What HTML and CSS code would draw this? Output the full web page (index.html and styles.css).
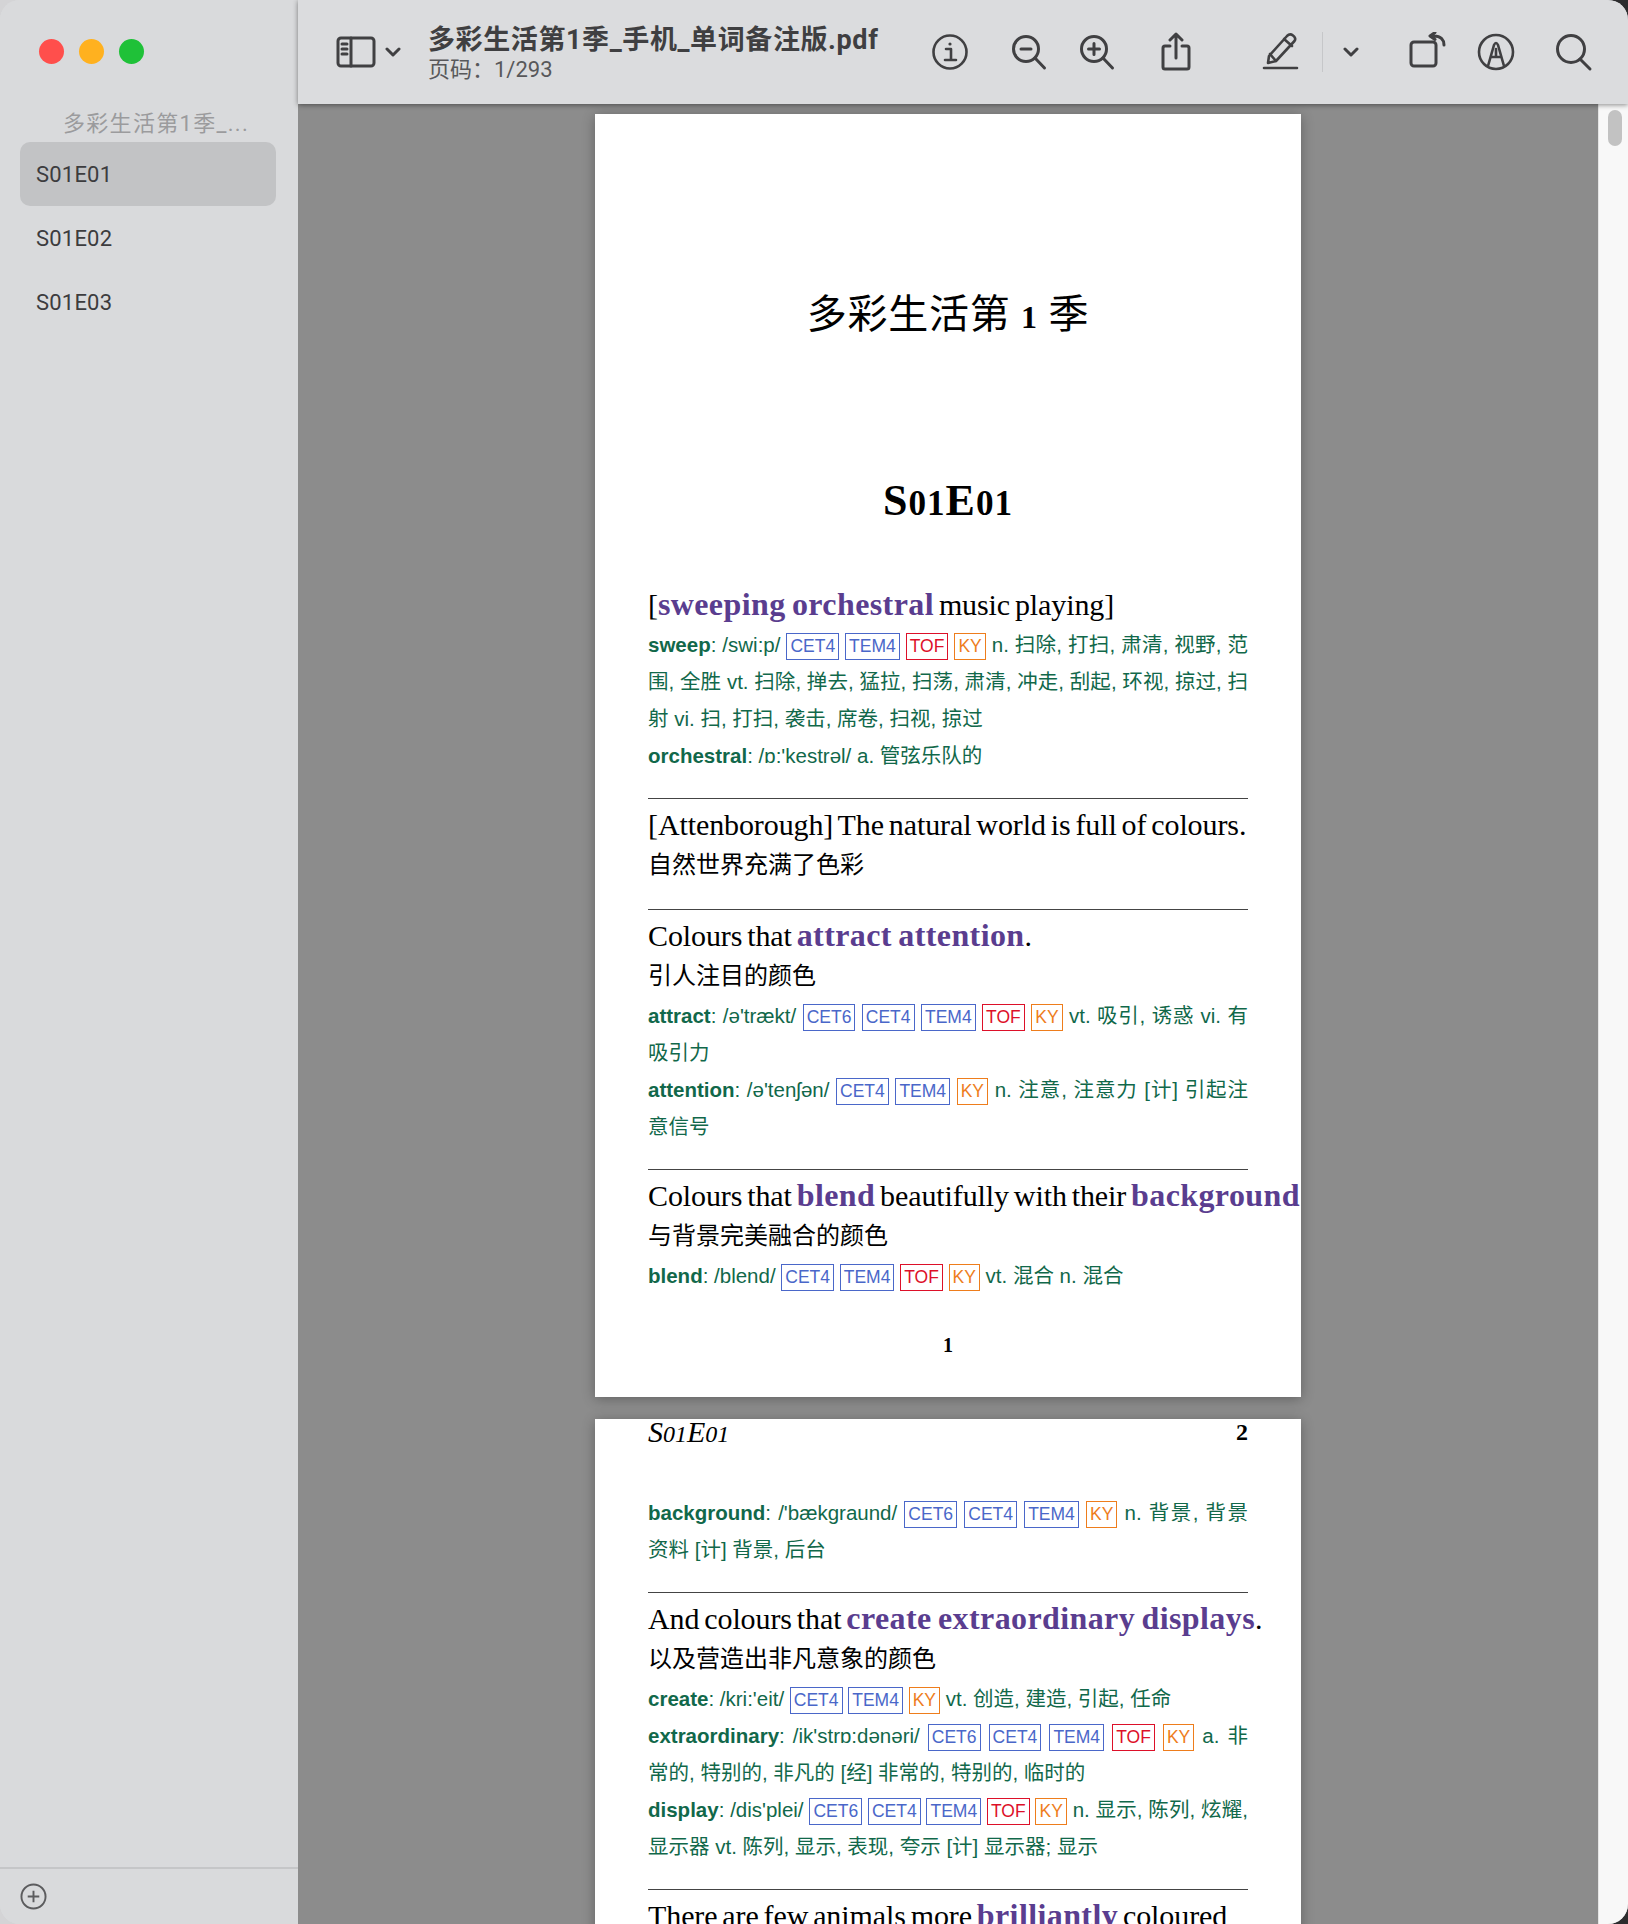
FILE: index.html
```html
<!DOCTYPE html>
<html>
<head>
    <meta charset="utf-8">
    <title>多彩生活第1季_手机_单词备注版.pdf</title>
    <link rel="stylesheet" href="styles.css">
</head>
<body>
    <div class="window">
        <aside class="sidebar">
            <div class="lights">
                <span class="light light-red"></span>
                <span class="light light-amber"></span>
                <span class="light light-green"></span>
            </div>
            <div class="doc-name">多彩生活第1季_...</div>
            <ul class="toc">
                <li class="toc-item selected">S01E01</li>
                <li class="toc-item">S01E02</li>
                <li class="toc-item">S01E03</li>
            </ul>
            <div class="sidebar-foot">
                <svg class="add-icon" viewBox="0 0 28 28"><circle cx="14" cy="14" r="12.5"/><path d="M14 8v12M8 14h12"/></svg>
            </div>
        </aside>

        <main class="main">
            <header class="toolbar">
                <svg class="tool tool-sidebar" viewBox="0 0 40 32"><rect x="2" y="2" width="36" height="28" rx="3"/><path d="M15 2v28M6 8h5M6 13h5M6 18h5"/></svg>
                <svg class="tool tool-chevron" viewBox="0 0 16 12"><path d="M2 3l6 6 6-6"/></svg>
                <div class="doc-title">
                    <div class="doc-file">多彩生活第1季_手机_单词备注版.pdf</div>
                    <div class="doc-page">页码：1/293</div>
                </div>
                <svg class="tool tool-info" viewBox="0 0 40 40"><circle cx="20" cy="20" r="16.5"/><path d="M16 17h5v11M15 28h11"/><circle class="dot" cx="20" cy="12" r="1.6"/></svg>
                <svg class="tool tool-zoomout" viewBox="0 0 40 40"><circle cx="17" cy="17" r="12.5"/><path d="M26 26l9.500 10M12 17h10"/></svg>
                <svg class="tool tool-zoomin" viewBox="0 0 40 40"><circle cx="17" cy="17" r="12.5"/><path d="M26 26l9.500 10M11.500 17h11M17 11.500v11"/></svg>
                <svg class="tool tool-share" viewBox="0 0 40 40"><path d="M14 14h-5a2 2 0 0 0-2 2v19a2 2 0 0 0 2 2h22a2 2 0 0 0 2-2V16a2 2 0 0 0-2-2h-5M20 26V2M14 8l6-6 6 6"/></svg>
                <svg class="tool tool-pen" viewBox="0 0 40 40"><path d="M2 36h33M7 24L25 4c2-2 4-2 6-.5s3 3.500 1.500 5.500L14 29l-8 2zM22 7l8 7M8 22l6 7"/></svg>
                <span class="tool-sep"></span>
                <svg class="tool tool-chevron-2" viewBox="0 0 16 12"><path d="M2 3l6 6 6-6"/></svg>
                <svg class="tool tool-rotate" viewBox="0 0 40 40"><rect x="2" y="10" width="25" height="24" rx="3"/><path d="M35 13c0-5-3-9-10-9M26 .5l-5 3.500 5 3.500"/></svg>
                <svg class="tool tool-markup" viewBox="0 0 40 40"><circle cx="20" cy="20" r="17"/><path d="M12 34l6-21q2-4 4 0l6 21M15 25h10M20 17v8"/></svg>
                <svg class="tool tool-search" viewBox="0 0 40 40"><circle cx="17" cy="17" r="13.500"/><path d="M26 27l10 10"/></svg>
            </header>

            <div class="viewer">
                <div class="pages">
                    <section class="page page-first">
                        <h1 class="book-title">多彩生活第 <b class="onum">1</b> 季</h1>
                        <h2 class="episode">S<span class="onum">01</span>E<span class="onum">01</span></h2>

                        <div class="block">
                            <p class="en">[<b>sweeping orchestral</b> music playing]</p>
                            <p class="word"><b>sweep</b>: /swi:p/ <span class="tag blue">CET4</span> <span class="tag blue">TEM4</span> <span class="tag red">TOF</span> <span class="tag orange">KY</span> n. 扫除, 打扫, 肃清, 视野, 范围, 全胜 vt. 扫除, 掸去, 猛拉, 扫荡, 肃清, 冲走, 刮起, 环视, 掠过, 扫射 vi. 扫, 打扫, 袭击, 席卷, 扫视, 掠过</p>
                            <p class="word"><b>orchestral</b>: /ɒ:'kestrəl/ a. 管弦乐队的</p>
                        </div>

                        <div class="block">
                            <p class="en nowrap">[Attenborough] The natural world is full of colours.</p>
                            <p class="zh">自然世界充满了色彩</p>
                        </div>

                        <div class="block">
                            <p class="en">Colours that <b>attract attention</b>.</p>
                            <p class="zh">引人注目的颜色</p>
                            <p class="word first-word"><b>attract</b>: /ə'trækt/ <span class="tag blue">CET6</span> <span class="tag blue">CET4</span> <span class="tag blue">TEM4</span> <span class="tag red">TOF</span> <span class="tag orange">KY</span> vt. 吸引, 诱惑 vi. 有吸引力</p>
                            <p class="word"><b>attention</b>: /ə'tenʃən/ <span class="tag blue">CET4</span> <span class="tag blue">TEM4</span> <span class="tag orange">KY</span> n. 注意, 注意力 [计] 引起注意信号</p>
                        </div>

                        <div class="block block-last">
                            <p class="en nowrap">Colours that <b>blend</b> beautifully with their <b>background</b></p>
                            <p class="zh">与背景完美融合的颜色</p>
                            <p class="word first-word"><b>blend</b>: /blend/ <span class="tag blue">CET4</span> <span class="tag blue">TEM4</span> <span class="tag red">TOF</span> <span class="tag orange">KY</span> vt. 混合 n. 混合</p>
                        </div>

                        <div class="page-number">1</div>
                    </section>

                    <section class="page">
                        <div class="running-head">
                            <i>S<span class="onum">01</span>E<span class="onum">01</span></i>
                            <b>2</b>
                        </div>

                        <div class="block block-top">
                            <p class="word"><b>background</b>: /'bækgraund/ <span class="tag blue">CET6</span> <span class="tag blue">CET4</span> <span class="tag blue">TEM4</span> <span class="tag orange">KY</span> n. 背景, 背景资料 [计] 背景, 后台</p>
                        </div>

                        <div class="block">
                            <p class="en nowrap">And colours that <b>create extraordinary displays</b>.</p>
                            <p class="zh">以及营造出非凡意象的颜色</p>
                            <p class="word first-word"><b>create</b>: /kri:'eit/ <span class="tag blue">CET4</span> <span class="tag blue">TEM4</span> <span class="tag orange">KY</span> vt. 创造, 建造, 引起, 任命</p>
                            <p class="word"><b>extraordinary</b>: /ik'strɒ:dənəri/ <span class="tag blue">CET6</span> <span class="tag blue">CET4</span> <span class="tag blue">TEM4</span> <span class="tag red">TOF</span> <span class="tag orange">KY</span> a. 非常的, 特别的, 非凡的 [经] 非常的, 特别的, 临时的</p>
                            <p class="word"><b>display</b>: /dis'plei/ <span class="tag blue">CET6</span> <span class="tag blue">CET4</span> <span class="tag blue">TEM4</span> <span class="tag red">TOF</span> <span class="tag orange">KY</span> n. 显示, 陈列, 炫耀, 显示器 vt. 陈列, 显示, 表现, 夸示 [计] 显示器; 显示</p>
                        </div>

                        <div class="block">
                            <p class="en nowrap">There are few animals more <b>brilliantly</b> coloured</p>
                        </div>
                    </section>
                </div>
                <div class="scrollbar"><div class="thumb"></div></div>
            </div>
        </main>
    </div>
</body>
</html>
```

FILE: styles.css
```css
* {
    box-sizing: border-box;
}

html,
body {
    margin: 0;
    padding: 0;
}

/* What shows through the rounded window corners */
body {
    background: linear-gradient(to right, #d4d4d6 50%, #2c2c2e 50%);
}

.window {
    display: flex;
    width: 1628px;
    height: 1924px;
    overflow: hidden;
    border-radius: 20px;
    background: #dadbdd;
    font-family: Roboto, "Noto Sans CJK SC", sans-serif;
}

/* Sidebar */
.sidebar {
    display: flex;
    flex-direction: column;
    flex: 0 0 298px;
    background: #d9dadc;
}

.lights {
    display: flex;
    gap: 15px;
    padding: 39px 0 0 39px;
    height: 104px;
}

.light {
    width: 25px;
    height: 25px;
    border-radius: 50%;
}

.light-red {
    background: #ff4f4c;
}

.light-amber {
    background: #ffb11f;
}

.light-green {
    background: #1fc138;
}

.doc-name {
    height: 38px;
    padding-left: 14px;
    line-height: 40px;
    font-size: 22px;
    letter-spacing: 1.3px;
    color: #9b9b9d;
    text-align: center;
}

.toc {
    flex: 1;
    margin: 0;
    padding: 0 22px 0 20px;
    list-style: none;
}

.toc-item {
    height: 64px;
    padding: 1px 0 0 16px;
    line-height: 64px;
    font-size: 22px;
    letter-spacing: 0.2px;
    color: #3c3c3e;
}

.toc-item.selected {
    border-radius: 10px;
    background: #c2c3c5;
}

.sidebar-foot {
    display: flex;
    align-items: center;
    height: 57px;
    padding-left: 20px;
    border-top: 2px solid #c5c6c8;
}

.add-icon {
    width: 27px;
    height: 27px;
    fill: none;
    stroke: #5c5c5e;
    stroke-width: 2;
}

/* Toolbar */
.main {
    display: flex;
    flex-direction: column;
    flex: 1;
    min-width: 0;
}

.toolbar {
    display: flex;
    align-items: center;
    flex: 0 0 104px;
    background: #dbdcde;
    position: relative;
    z-index: 2;
    box-shadow: 0 1px 5px rgba(0, 0, 0, 0.45);
}

.tool {
    flex: none;
    width: 40px;
    height: 40px;
    fill: none;
    stroke: #404042;
    stroke-width: 3;
    stroke-linecap: round;
    stroke-linejoin: round;
}

.tool .dot {
    fill: #404042;
    stroke: none;
}

.tool-sidebar {
    width: 40px;
    height: 32px;
    margin-left: 38px;
}

.tool-chevron {
    width: 16px;
    height: 12px;
    margin-left: 9px;
    stroke-width: 3;
}

.doc-title {
    width: 460px;
    margin-left: 27px;
    color: #3f3f41;
}

.doc-file {
    padding-top: 1px;
    font-size: 27px;
    font-weight: 700;
    letter-spacing: 0.6px;
    line-height: 34px;
}

.doc-page {
    font-size: 22px;
    line-height: 26px;
    color: #58585a;
}

.tool-info {
    margin-left: 42px;
    stroke-width: 2.600;
}

.tool-zoomout {
    margin-left: 39px;
}

.tool-zoomin {
    margin-left: 28px;
}

.tool-share {
    margin-left: 39px;
}

.tool-pen {
    margin-left: 66px;
    stroke-width: 2.600;
}

.tool-sep {
    flex: none;
    width: 1px;
    height: 40px;
    margin-left: 20px;
    background: #c6c7c9;
}

.tool-chevron-2 {
    width: 16px;
    height: 12px;
    margin-left: 20px;
}

.tool-rotate {
    margin-left: 50px;
}

.tool-markup {
    margin-left: 27px;
    stroke-width: 2.600;
}

.tool-search {
    margin-left: 38px;
}

/* Pages */
.viewer {
    display: flex;
    flex: 1;
    min-height: 0;
    overflow: hidden;
    background: #8c8c8c;
}

.pages {
    display: flex;
    flex-direction: column;
    align-items: center;
    gap: 22px;
    flex: 1;
    padding-top: 10px;
}

.page {
    flex: none;
    width: 706px;
    height: 1283px;
    padding: 0 53px;
    background: #fff;
    color: #000;
    box-shadow: 0 2px 12px rgba(0, 0, 0, 0.3);
    font-family: "Liberation Serif", "Noto Sans CJK SC", serif;
}

.page-first {
    padding-top: 176px;
}

.book-title {
    margin: 0;
    font-size: 40px;
    font-weight: 400;
    letter-spacing: 0.7px;
    line-height: 50px;
    text-align: center;
}

.episode {
    margin: 134px 0 50px;
    font-size: 44px;
    letter-spacing: 1px;
    line-height: 50px;
    text-align: center;
}

.onum {
    font-size: 0.8em;
}

.block {
    padding: 6px 0 24px;
    border-bottom: 1px solid #444;
}

.block-last {
    border-bottom: 0;
}

.block-top {
    padding-top: 0;
}

.en,
.zh,
.word {
    margin: 0;
}

.en {
    margin-bottom: 2px;
    font-size: 30px;
    letter-spacing: -0.1px;
    line-height: 39px;
    word-spacing: -2.500px;
}

.en b {
    font-size: 32px;
    letter-spacing: 0.4px;
    line-height: 1;
    word-spacing: -2px;
    color: #5a3d8f;
}

.nowrap {
    white-space: nowrap;
}

.zh {
    font-size: 24px;
    line-height: 39px;
}

.word {
    font-family: "Liberation Sans", "Noto Sans CJK SC", sans-serif;
    font-size: 20.500px;
    line-height: 37px;
    color: #11684a;
    text-align: justify;
}

.first-word {
    margin-top: 1px;
}

.tag {
    display: inline-block;
    height: 27px;
    padding: 0 3px;
    border: 1px solid;
    font-size: 17.500px;
    line-height: 25px;
}

.tag.blue {
    color: #4a67c9;
}

.tag.red {
    color: #dd1029;
}

.tag.orange {
    color: #ee7d1c;
}

.page-number {
    margin-top: 15px;
    font-size: 20px;
    font-weight: 700;
    line-height: 24px;
    text-align: center;
}

.running-head {
    display: flex;
    justify-content: space-between;
    margin-bottom: 47px;
    font-size: 30px;
    line-height: 26px;
}

.running-head b {
    font-size: 24px;
}

.scrollbar {
    flex: 0 0 30px;
    padding: 6px 6px 0 9px;
    background: #f8f8f8;
    border-left: 1px solid #e4e4e4;
}

.thumb {
    height: 36px;
    border-radius: 8px;
    background: #c2c2c2;
}
```
